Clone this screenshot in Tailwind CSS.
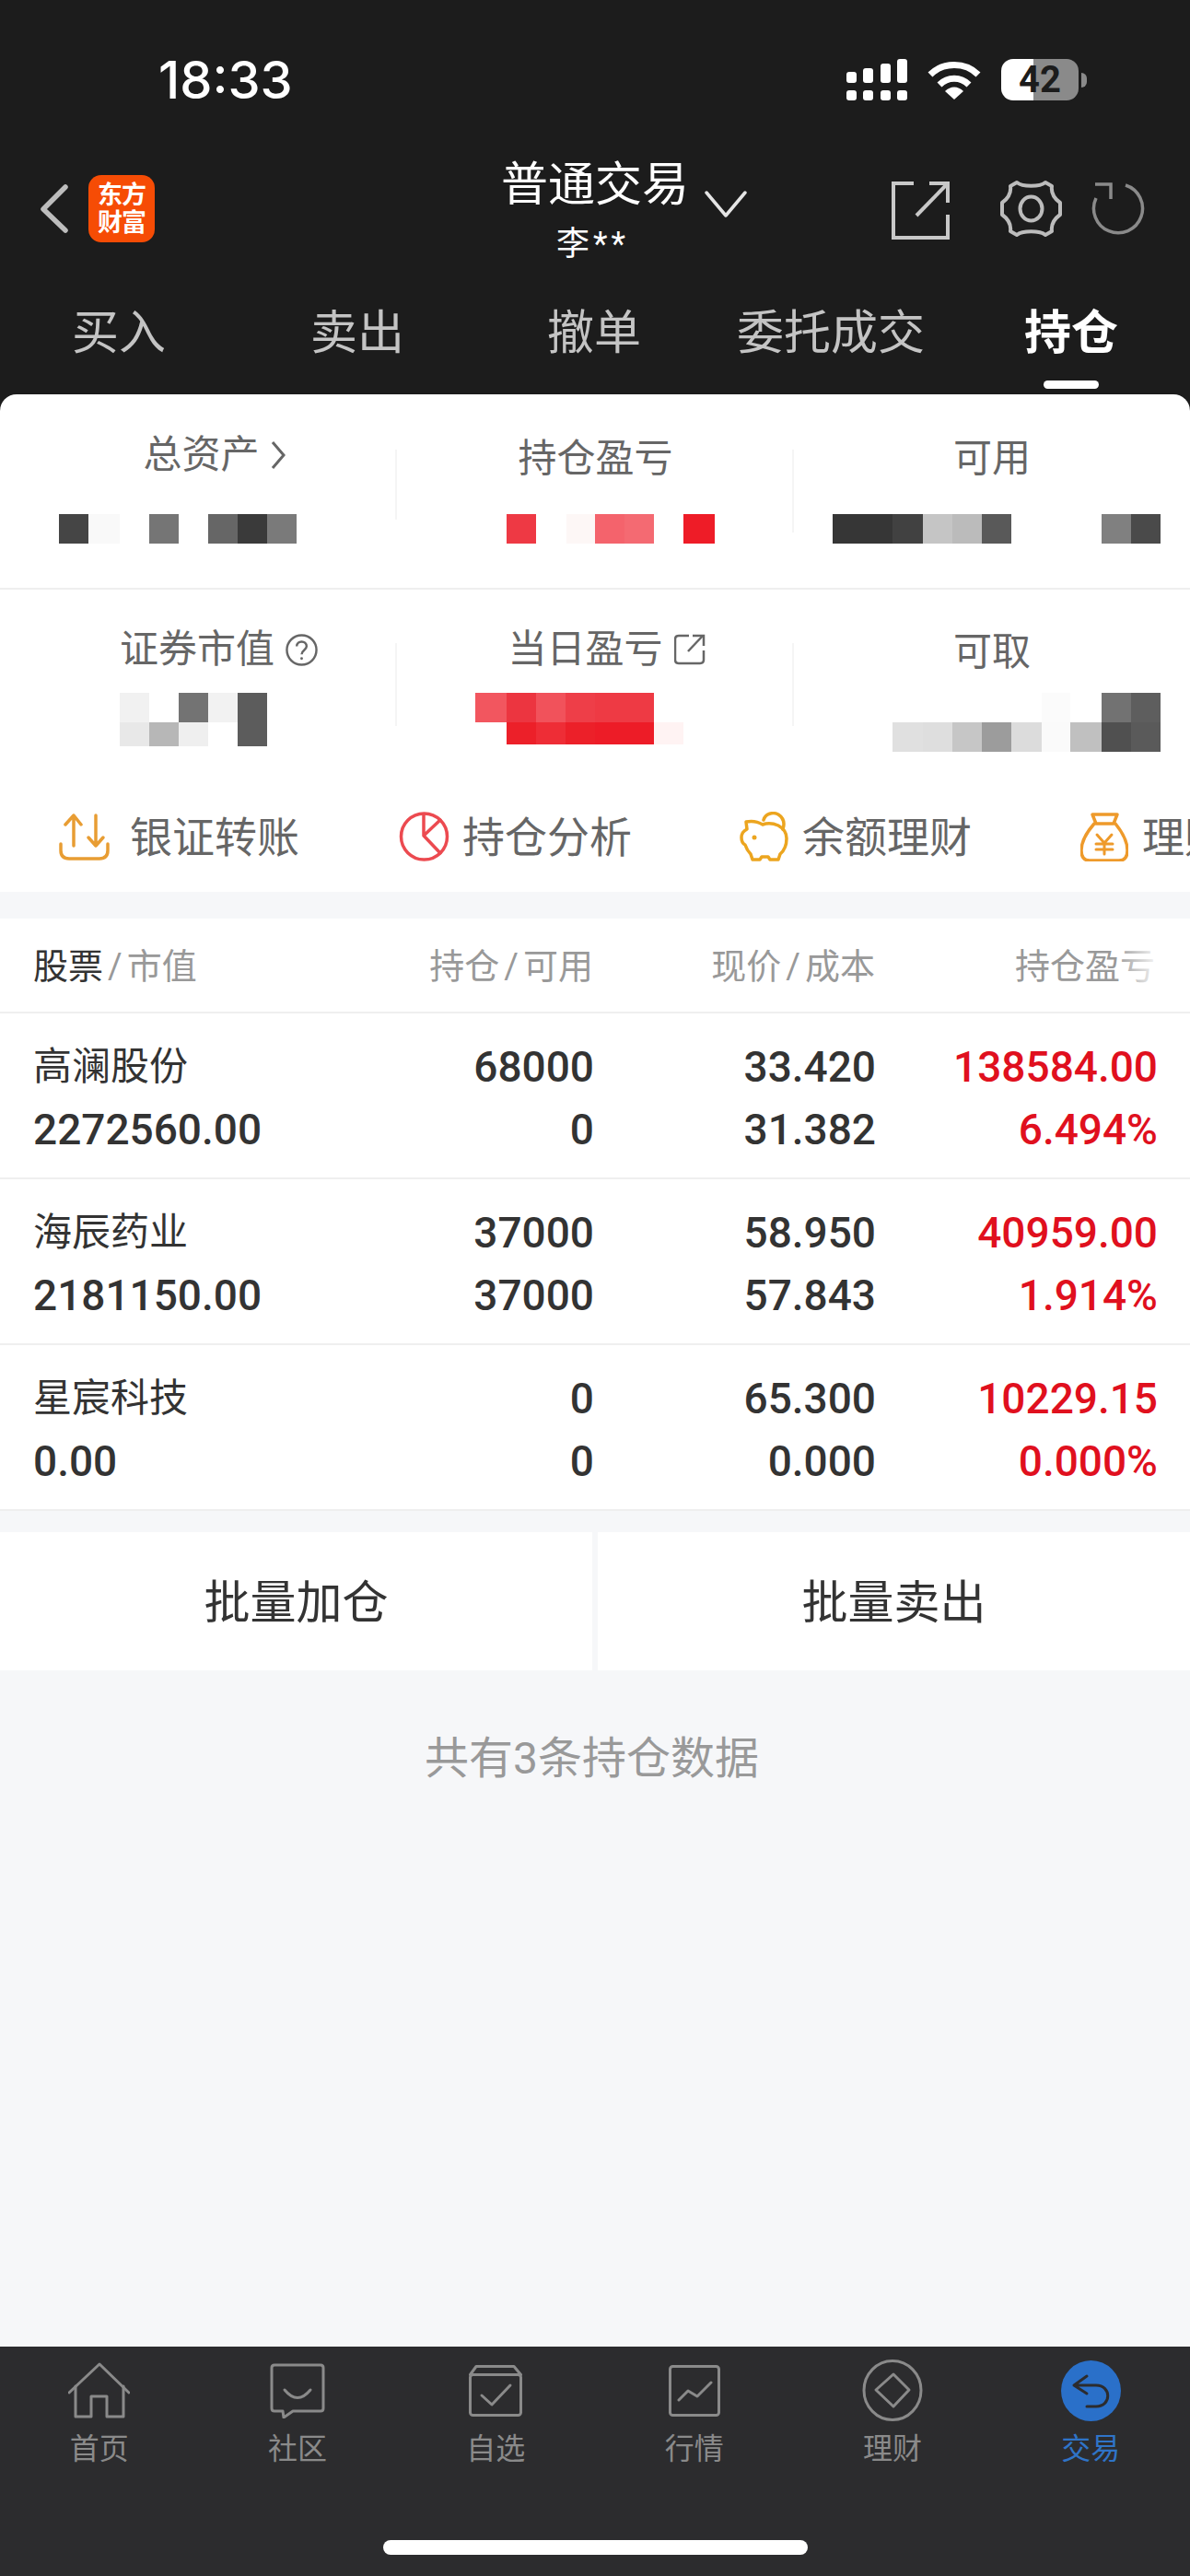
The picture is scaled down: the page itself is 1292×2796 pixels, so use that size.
<!DOCTYPE html>
<html lang="zh-CN">
<head>
    <meta charset="UTF-8">
    <title>普通交易 - 持仓</title>
    <script src="https://cdn.jsdelivr.net/npm/@tailwindcss/browser@4"></script>
</head>
<body class="bg-[#f6f7f9] font-['Roboto','Noto_Sans_CJK_SC',sans-serif]">
<div class="w-[1292px] h-[2796px] flex flex-col overflow-hidden">

    <!-- Dark header -->
    <div class="bg-[#1c1c1c] h-[428px] shrink-0 flex flex-col">
        <!-- Status bar -->
        <div class="h-[170px] pt-[56px] pl-[172px] pr-[112px] flex justify-between items-start">
            <span class="text-white text-[56px] leading-[62px] font-medium font-['Inter','Noto_Sans_CJK_SC',sans-serif]">18:33</span>
            <div class="flex items-center gap-[22px] pt-[8px]">
                <svg width="66" height="45" viewBox="0 0 66 45" fill="white">
                    <rect x="0" y="14" width="11" height="12" rx="3"/><rect x="18" y="10" width="11" height="16" rx="3"/><rect x="37" y="5" width="11" height="21" rx="3"/><rect x="55" y="0" width="11" height="26" rx="3"/>
                    <rect x="0" y="34" width="11" height="11" rx="3"/><rect x="18" y="34" width="11" height="11" rx="3"/><rect x="37" y="34" width="11" height="11" rx="3"/><rect x="55" y="34" width="11" height="11" rx="3"/>
                </svg>
                <svg width="58" height="42" viewBox="0 0 58 42" fill="none" stroke="white" stroke-width="7">
                    <path d="M3 15 C17 1 41 1 55 15"/><path d="M13 26 C22 17 36 17 45 26"/><path d="M19 33 L29 42 L39 33 C33 27 25 27 19 33 Z" fill="white" stroke="none"/>
                </svg>
                <div class="flex items-center">
                    <div class="w-[84px] h-[45px] rounded-[13px] bg-[linear-gradient(90deg,#ffffff_35px,#8a8a8a_35px)] flex items-center justify-center">
                        <span class="text-[#1c1c1c] text-[40px] leading-[44px] font-bold">42</span>
                    </div>
                    <div class="w-[6px] h-[16px] bg-[#8a8a8a] rounded-r-full ml-[3px]"></div>
                </div>
            </div>
        </div>

        <!-- Nav bar -->
        <div class="h-[160px] relative">
            <svg class="absolute left-[44px] top-[30px]" width="30" height="53" viewBox="0 0 30 53" fill="none" stroke="#bdbdbd" stroke-width="5.5" stroke-linecap="round" stroke-linejoin="round"><path d="M27 3 L3 27 L27 50"/></svg>
            <div class="absolute left-[96px] top-[20px] w-[72px] h-[73px] rounded-[14px] bg-[#f64c05] flex flex-col items-center justify-center text-white text-[27px] leading-[30px] font-bold">
                <span class="tracking-[-1px]">东方</span><span class="tracking-[-1px]">财富</span>
            </div>
            <div class="absolute left-[544px] top-[1px] text-white text-[51px] leading-[60px] whitespace-nowrap">普通交易</div>
            <svg class="absolute left-[765px] top-[36px]" width="46" height="30" viewBox="0 0 46 30" fill="none" stroke="#e5e5e5" stroke-width="3.5" stroke-linecap="round" stroke-linejoin="round"><path d="M2 3 L23 28 L44 3"/></svg>
            <div class="absolute left-[604px] top-[73px] text-white text-[36px] leading-[44px] whitespace-nowrap tracking-[4px]">李**</div>
            <svg class="absolute left-[968px] top-[27px]" width="63" height="63" viewBox="0 0 63 63" fill="none" stroke="#c8c8c8" stroke-width="4"><path d="M24 2 H2 V61 H61 V36"/><path d="M27 37 L60 3"/><path d="M41 2 H61 V23"/></svg>
            <svg class="absolute left-[1086px] top-[25px]" width="67" height="63" viewBox="0 0 67 63" fill="none" stroke="#bcbcbc" stroke-width="4" stroke-linejoin="round"><path d="M18 3 C24 8 43 8 49 3 L56 7 C55 14 58 20 65 25 V38 C58 43 55 49 56 56 L49 60 C43 55 24 55 18 60 L11 56 C12 49 9 43 2 38 V25 C9 20 12 14 11 7 Z"/><ellipse cx="33.5" cy="31.5" rx="12" ry="13"/></svg>
            <svg class="absolute left-[1185px] top-[28px]" width="58" height="57" viewBox="0 0 58 57" fill="none" stroke="#8a8a8a" stroke-width="3.5"><path d="M37 3 A26.5 26.5 0 1 1 5 17"/><path d="M4 2 H21 V18"/></svg>
        </div>

        <!-- Tabs -->
        <div class="relative flex-1 text-[#c4c4c4] text-[51px] leading-[60px]">
            <span class="absolute left-[78px] top-[2px]">买入</span>
            <span class="absolute left-[337px] top-[2px]">卖出</span>
            <span class="absolute left-[594px] top-[2px]">撤单</span>
            <span class="absolute left-[800px] top-[2px]">委托成交</span>
            <span class="absolute left-[1112px] top-[2px] text-white font-bold">持仓</span>
            <div class="absolute left-[1133px] bottom-[6px] w-[60px] h-[9px] rounded-full bg-white"></div>
        </div>
    </div>

    <!-- Summary card -->
    <div class="bg-[#1c1c1c] shrink-0">
    <div class="bg-white rounded-t-[18px]">
        <div class="h-[212px] flex border-b-2 border-[#efefef]">
            <div class="w-[431px] relative flex flex-col items-center pt-[48px]">
                <div class="h-[44px] text-[#666] text-[42px] leading-[44px] flex items-center gap-[12px] -mt-[4px] ml-[34px]">总资产<svg width="16" height="34" viewBox="0 0 16 34" fill="none" stroke="#666" stroke-width="3"><path d="M2 3 L14 17 L2 31"/></svg></div>
                <div class="absolute left-[64px] top-[130px] flex h-[32px]">
                    <i class="w-[32px] bg-[#454545]"></i><i class="w-[34px] bg-[#f9f9f9]"></i><i class="w-[32px] bg-white"></i><i class="w-[32px] bg-[#757575]"></i><i class="w-[32px] bg-white"></i><i class="w-[32px] bg-[#666]"></i><i class="w-[32px] bg-[#3a3a3a]"></i><i class="w-[32px] bg-[#7a7a7a]"></i>
                </div>
                <div class="absolute right-0 top-[60px] h-[76px] w-[2px] bg-[#f5f5f5]"></div>
            </div>
            <div class="w-[431px] relative flex flex-col items-center pt-[48px]">
                <div class="h-[44px] text-[#666] text-[42px] leading-[44px]">持仓盈亏</div>
                <div class="absolute left-[119px] top-[130px] flex h-[32px]">
                    <i class="w-[32px] bg-[#ee3944]"></i><i class="w-[33px] bg-white"></i><i class="w-[31px] bg-[#fdf7f6]"></i><i class="w-[32px] bg-[#f4636c]"></i><i class="w-[32px] bg-[#f46a72]"></i><i class="w-[32px] bg-white"></i><i class="w-[34px] bg-[#ee1c27]"></i>
                </div>
                <div class="absolute right-0 top-[60px] h-[90px] w-[2px] bg-[#f5f5f5]"></div>
            </div>
            <div class="flex-1 relative flex flex-col items-center pt-[48px]">
                <div class="h-[44px] text-[#666] text-[42px] leading-[44px]">可用</div>
                <div class="absolute left-[42px] top-[130px] flex h-[32px]">
                    <i class="w-[65px] bg-[#363636]"></i><i class="w-[33px] bg-[#414141]"></i><i class="w-[32px] bg-[#c5c5c5]"></i><i class="w-[32px] bg-[#bbb]"></i><i class="w-[32px] bg-[#595959]"></i><i class="w-[98px] bg-white"></i><i class="w-[32px] bg-[#808080]"></i><i class="w-[32px] bg-[#4a4a4a]"></i>
                </div>
            </div>
        </div>

        <div class="h-[212px] flex">
            <div class="w-[431px] relative flex flex-col items-center pt-[43px]">
                <div class="h-[44px] text-[#666] text-[42px] leading-[44px] flex items-center gap-[12px] ml-[44px]">证券市值<svg width="35" height="35" viewBox="0 0 36 36" fill="none" stroke="#666" stroke-width="2.5"><circle cx="18" cy="18" r="16.5"/><path d="M12.5 14 C12.5 7 23.5 7 23.5 14 C23.5 18 18 18 18 23"/><circle cx="18" cy="27.5" r="1.5" fill="#666" stroke="none"/></svg></div>
                <div class="absolute left-[130px] top-[112px] grid grid-cols-[32px_32px_32px_32px_32px] grid-rows-[32px_26px]">
                    <i class="bg-[#f1f1f1]"></i><i class="bg-white"></i><i class="bg-[#737373]"></i><i class="bg-[#f2f2f2]"></i><i class="bg-[#5c5c5c]"></i>
                    <i class="bg-[#e8e8e8]"></i><i class="bg-[#b7b7b7]"></i><i class="bg-[#efefef]"></i><i class="bg-white"></i><i class="bg-[#5c5c5c]"></i>
                </div>
                <div class="absolute right-0 top-[58px] h-[90px] w-[2px] bg-[#f5f5f5]"></div>
            </div>
            <div class="w-[431px] relative flex flex-col items-center pt-[43px]">
                <div class="h-[44px] text-[#666] text-[42px] leading-[44px] flex items-center gap-[12px] ml-[24px]">当日盈亏<svg width="34" height="34" viewBox="0 0 34 34" fill="none" stroke="#666" stroke-width="2.5"><path d="M16 2 L5 2 Q1 2 1 6 L1 28 Q1 32 5 32 L28 32 Q32 32 32 28 L32 18"/><path d="M15 19 L31 2"/><path d="M20 2 L32 2 L32 13"/></svg></div>
                <div class="absolute left-[85px] top-[112px] grid grid-cols-[34px_32px_32px_32px_32px_32px_32px] grid-rows-[32px_24px]">
                    <i class="bg-[#f2565f]"></i><i class="bg-[#ec3540]"></i><i class="bg-[#f1525b]"></i><i class="bg-[#ee3e48]"></i><i class="bg-[#ee3a44]"></i><i class="bg-[#ee3a44]"></i><i class="bg-white"></i>
                    <i class="bg-white"></i><i class="bg-[#ec2029]"></i><i class="bg-[#ee2d36]"></i><i class="bg-[#ec2029]"></i><i class="bg-[#ed1c27]"></i><i class="bg-[#ed1c27]"></i><i class="bg-[#fff3f3]"></i>
                </div>
                <div class="absolute right-0 top-[58px] h-[90px] w-[2px] bg-[#f5f5f5]"></div>
            </div>
            <div class="flex-1 relative flex flex-col items-center pt-[46px]">
                <div class="h-[44px] text-[#666] text-[42px] leading-[44px]">可取</div>
                <div class="absolute left-[107px] top-[112px] grid grid-cols-[33px_32px_32px_32px_33px_31px_34px_32px_32px] grid-rows-[32px_32px]">
                    <i class="bg-white"></i><i class="bg-white"></i><i class="bg-white"></i><i class="bg-white"></i><i class="bg-white"></i><i class="bg-[#fbfbfb]"></i><i class="bg-white"></i><i class="bg-[#727272]"></i><i class="bg-[#5e5e5e]"></i>
                    <i class="bg-[#e0e0e0]"></i><i class="bg-[#dedede]"></i><i class="bg-[#c6c6c6]"></i><i class="bg-[#9c9c9c]"></i><i class="bg-[#dcdcdc]"></i><i class="bg-[#fafafa]"></i><i class="bg-[#c0c0c0]"></i><i class="bg-[#505050]"></i><i class="bg-[#5a5a5a]"></i>
                </div>
            </div>
        </div>

        <!-- Shortcuts -->
        <div class="h-[116px] relative overflow-hidden text-[#666] text-[46px] leading-[54px]">
            <div class="absolute left-[64px] top-[29px] h-[54px] flex items-center gap-[22px] whitespace-nowrap"><svg width="55" height="51" viewBox="0 0 55 51" fill="none" stroke="#e89d33" stroke-width="3.5" stroke-linecap="round" stroke-linejoin="round"><path d="M2 33 V40 Q2 49 11 49 H44 Q53 49 53 40 V33"/><path d="M16 35 V2 M7 12 L16 2 L24 12"/><path d="M40 2 V35 M32 26 L40 35 L48 26"/></svg><span class="pt-[2px]">银证转账</span></div>
            <div class="absolute left-[433px] top-[29px] h-[54px] flex items-center gap-[14px] whitespace-nowrap"><svg width="55" height="54" viewBox="0 0 55 54" fill="none" stroke="#ec4a50" stroke-width="3.5" stroke-linejoin="round"><circle cx="27.5" cy="27" r="25"/><path d="M27 2 V26 L46 46 M27 26 L46 8"/></svg><span class="pt-[2px]">持仓分析</span></div>
            <div class="absolute left-[803px] top-[29px] h-[54px] flex items-center gap-[15px] whitespace-nowrap"><svg width="53" height="54" viewBox="0 0 53 54" fill="none" stroke="#eca51f" stroke-width="3.5" stroke-linejoin="round" stroke-linecap="round"><path d="M7 11 L8 19 Q2 22 2 28 Q2 34 6 36 Q8 42 12 46 L14 52 H22 L24 49 H31 L33 52 H42 L44 46 Q51 40 51 29 Q51 20 42 15 Q33 11 25 14 Q17 9 7 11 Z"/><path d="M26 9 C28 2 36 0 42 3 C48 7 49 13 47 19"/><circle cx="16" cy="28" r="2.5" fill="#eca51f" stroke="none"/></svg><span class="pt-[2px]">余额理财</span></div>
            <div class="absolute left-[1173px] top-[29px] h-[54px] flex items-center gap-[15px] whitespace-nowrap"><svg width="52" height="53" viewBox="0 0 52 53" fill="none" stroke="#ee9a2b" stroke-width="3.5" stroke-linejoin="round" stroke-linecap="round"><path d="M13 2 H40 L36 12 H17 Z"/><path d="M15 12 Q1 28 1 41 Q1 52 10 52 H42 Q51 52 51 41 Q51 28 38 12"/><path d="M18 24 L26 33 L34 24 M17 34 H35 M17 40 H35 M26 33 V45" stroke-width="3"/></svg><span class="pt-[2px]">理财</span></div>
        </div>
    </div>
    </div>

    <div class="h-[29px] shrink-0"></div>

    <!-- Positions table -->
    <div class="bg-white shrink-0">
        <div class="h-[103px] border-b-2 border-[#efefef] relative text-[#999] text-[38px] leading-[48px]">
            <div class="absolute left-[36px] top-[28px] flex whitespace-nowrap"><span class="text-[#333]">股票</span><span class="mx-[5px]">/</span><span>市值</span></div>
            <div class="absolute right-[648px] top-[28px] flex whitespace-nowrap"><span>持仓</span><span class="mx-[5px]">/</span><span>可用</span></div>
            <div class="absolute right-[342px] top-[28px] flex whitespace-nowrap"><span>现价</span><span class="mx-[5px]">/</span><span>成本</span></div>
            <div class="absolute right-[38px] top-[28px] whitespace-nowrap">持仓盈亏</div>
            <div class="absolute right-[36px] top-[28px] w-[40px] h-[48px] bg-linear-to-r from-white/10 to-white/90"></div>
        </div>
        <div class="h-[180px] border-b-2 border-[#efefef] grid grid-cols-[1fr_170px_306px_306px] auto-rows-[48px] gap-y-[20px] pt-[34px] pl-[36px] pr-[35px] text-[#333] text-[46px] leading-[48px] font-medium text-right">
            <span class="text-left text-[42px] font-normal">高澜股份</span><span>68000</span><span>33.420</span><span class="text-[#e0101e]">138584.00</span>
            <span class="text-left">2272560.00</span><span>0</span><span>31.382</span><span class="text-[#e0101e]">6.494%</span>
        </div>
        <div class="h-[180px] border-b-2 border-[#efefef] grid grid-cols-[1fr_170px_306px_306px] auto-rows-[48px] gap-y-[20px] pt-[34px] pl-[36px] pr-[35px] text-[#333] text-[46px] leading-[48px] font-medium text-right">
            <span class="text-left text-[42px] font-normal">海辰药业</span><span>37000</span><span>58.950</span><span class="text-[#e0101e]">40959.00</span>
            <span class="text-left">2181150.00</span><span>37000</span><span>57.843</span><span class="text-[#e0101e]">1.914%</span>
        </div>
        <div class="h-[180px] border-b-2 border-[#efefef] grid grid-cols-[1fr_170px_306px_306px] auto-rows-[48px] gap-y-[20px] pt-[34px] pl-[36px] pr-[35px] text-[#333] text-[46px] leading-[48px] font-medium text-right">
            <span class="text-left text-[42px] font-normal">星宸科技</span><span>0</span><span>65.300</span><span class="text-[#e0101e]">10229.15</span>
            <span class="text-left">0.00</span><span>0</span><span>0.000</span><span class="text-[#e0101e]">0.000%</span>
        </div>
    </div>

    <!-- Batch buttons -->
    <div class="mt-[23px] h-[150px] shrink-0 flex gap-[6px] text-[#333] text-[50px]">
        <div class="w-[643px] pt-[4px] bg-white flex items-center justify-center">批量加仓</div>
        <div class="flex-1 pt-[4px] bg-white flex items-center justify-center">批量卖出</div>
    </div>
    <div class="flex-1 pt-[66px] pr-[7px] text-center text-[#999] text-[48px] leading-[60px]">共有3条持仓数据</div>

    <!-- Bottom tabs -->
    <div class="h-[249px] shrink-0 bg-[#2c2c2e] relative text-[#8a8a8a] text-[32px] leading-[40px]">
        <div class="grid grid-cols-6 pt-[14px]">
            <div class="flex flex-col items-center gap-[10px]">
                <div class="h-[67px] flex items-center"><svg width="67" height="61" viewBox="0 0 67 61" fill="none" stroke="#8a8a8a" stroke-width="3" stroke-linejoin="round" stroke-linecap="round"><path d="M1 33 L34 2 L66 33"/><path d="M8 26 V59 H25 V37 H42 V59 H60 V26"/></svg></div>
                <span>首页</span>
            </div>
            <div class="flex flex-col items-center gap-[10px]">
                <div class="h-[67px] flex items-center"><svg width="60" height="60" viewBox="0 0 60 60" fill="none" stroke="#8a8a8a" stroke-width="3" stroke-linejoin="round" stroke-linecap="round"><path d="M5 2 H55 Q58 2 58 5 V49 Q58 52 55 52 H25 L15 59 L14 52 H5 Q2 52 2 49 V5 Q2 2 5 2 Z"/><path d="M16 29 Q30 46 44 29"/></svg></div>
                <span>社区</span>
            </div>
            <div class="flex flex-col items-center gap-[10px]">
                <div class="h-[67px] flex items-center"><svg width="58" height="56" viewBox="0 0 58 56" fill="none" stroke="#8a8a8a" stroke-width="3" stroke-linejoin="round" stroke-linecap="round"><rect x="1.5" y="10.5" width="55" height="44" rx="3"/><path d="M1.5 10.5 L8 1.5 H49 L56.5 10.5"/><path d="M14 33 L25 43 L45 22"/></svg></div>
                <span>自选</span>
            </div>
            <div class="flex flex-col items-center gap-[10px]">
                <div class="h-[67px] flex items-center"><svg width="56" height="56" viewBox="0 0 56 56" fill="none" stroke="#8a8a8a" stroke-width="3" stroke-linejoin="round" stroke-linecap="round"><rect x="1.5" y="1.5" width="53" height="53" rx="3"/><path d="M11 38 L21 28 L31 34 L46 19"/></svg></div>
                <span>行情</span>
            </div>
            <div class="flex flex-col items-center gap-[10px]">
                <div class="h-[67px] flex items-center"><svg width="66" height="67" viewBox="0 0 66 67" fill="none" stroke="#8a8a8a" stroke-width="3" stroke-linejoin="round"><ellipse cx="33" cy="33.5" rx="31" ry="32"/><path d="M34 16 L51 33 L34 51 L15 33 Z"/></svg></div>
                <span>理财</span>
            </div>
            <div class="flex flex-col items-center gap-[10px] text-[#2f74c8]">
                <div class="h-[67px] flex items-center"><svg width="65" height="66" viewBox="0 0 65 66"><ellipse cx="32.5" cy="33" rx="32.5" ry="33" fill="#2a70c9"/><path d="M28 17 L14 27 L28 36 M14 27 H38 C55 27 55 50 38 50 H28" fill="none" stroke="#2c2c2e" stroke-width="3" stroke-linecap="round" stroke-linejoin="round"/></svg></div>
                <span>交易</span>
            </div>
        </div>
        <div class="absolute left-[416px] bottom-[23px] w-[461px] h-[16px] rounded-full bg-white"></div>
    </div>
</div>
</body>
</html>
